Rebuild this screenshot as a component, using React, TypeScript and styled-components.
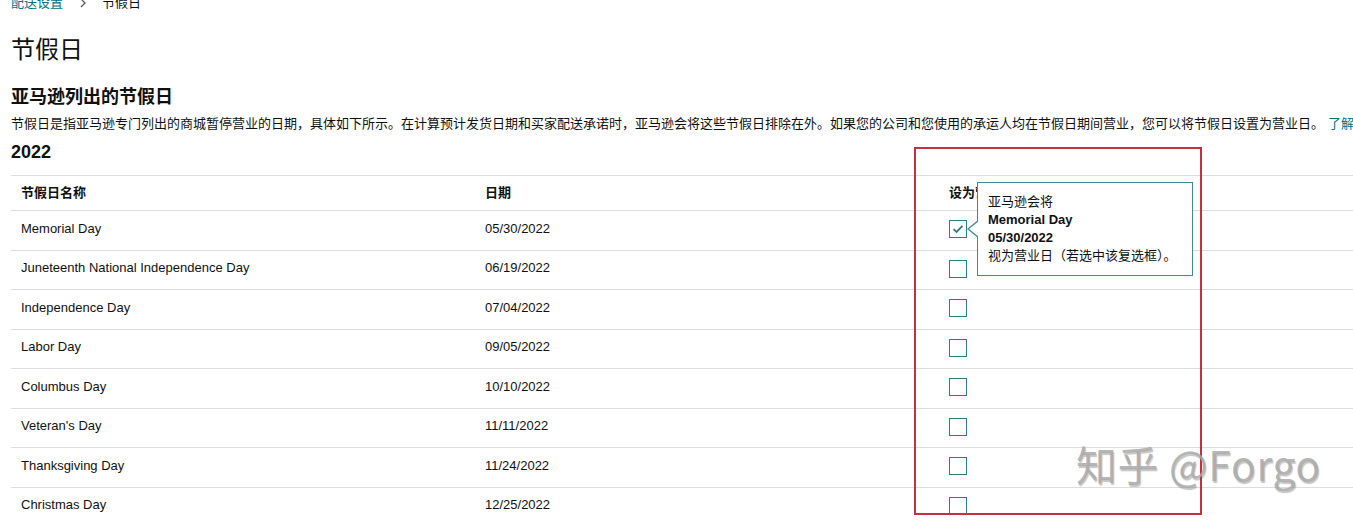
import React from "react";
import styled, { createGlobalStyle } from "styled-components";

const GlobalStyle = createGlobalStyle`
  html, body {
    margin: 0;
    padding: 0;
    background: #fff;
    overflow: hidden;
  }
  body {
    font-family: "Liberation Sans", Arial, "Noto Sans CJK SC", sans-serif;
    color: #0f1111;
  }
`;

const Page = styled.div`
  position: relative;
  display: flex;
  flex-direction: column;
  align-items: stretch;
  padding-left: 11px;
  width: 1353px;
  box-sizing: border-box;
`;

const Breadcrumb = styled.div`
  display: flex;
  align-items: center;
  height: 20px;
  margin-top: -7px;
  font-size: 13px;
  line-height: 20px;
`;

const CrumbLink = styled.a`
  color: #007185;
  text-decoration: none;
`;

const CrumbSep = styled.span`
  display: flex;
  align-items: center;
  margin: 0 16px 0 17px;
  color: #565959;
`;

const CrumbCurrent = styled.span`
  color: #0f1111;
`;

const Title = styled.h1`
  margin: 22px 0 0;
  font-size: 24px;
  font-weight: 400;
  line-height: 30px;
  color: #0f1111;
`;

const SectionTitle = styled.h2`
  margin: 20px 0 0;
  font-size: 18px;
  font-weight: 700;
  line-height: 24px;
  color: #0f1111;
`;

const Description = styled.p`
  margin: 6px 0 0;
  font-size: 13px;
  line-height: 18px;
  color: #0f1111;
  white-space: nowrap;
  overflow: hidden;
`;

const Link = styled.a`
  color: #007185;
  text-decoration: none;
  margin-left: 4px;
`;

const Year = styled.h3`
  margin: 8px 0 0;
  font-size: 18px;
  font-weight: 700;
  line-height: 22px;
  color: #0f1111;
`;

const Table = styled.table`
  margin-top: 12px;
  width: 100%;
  border-collapse: collapse;
  table-layout: fixed;
  font-size: 13px;
  color: #0f1111;
`;

const HeadCell = styled.th<{ $w?: number }>`
  width: ${(p) => (p.$w ? `${p.$w}px` : "auto")};
  height: 30px;
  padding: 0 10px 4px;
  text-align: left;
  font-weight: 700;
  border-top: 1px solid #dddddd;
  border-bottom: 1px solid #dddddd;
  white-space: nowrap;
  overflow: hidden;
`;

const Row = styled.tr`
  border-bottom: 1px solid #dddddd;
`;

const Cell = styled.td`
  height: 34.5px;
  padding: 0 10px 4px;
  vertical-align: middle;
  white-space: nowrap;
`;

const CheckCell = styled(Cell)`
  padding-bottom: 2px;
  height: 36.5px;
`;

const Box = styled.span<{ $checked?: boolean }>`
  display: flex;
  align-items: center;
  justify-content: center;
  width: 18px;
  height: 18px;
  box-sizing: border-box;
  border: 1px solid #2f7c87;
  background: #fff;
  color: #2f7c87;
`;

const Tooltip = styled.div`
  position: absolute;
  left: 977px;
  top: 182px;
  width: 216px;
  box-sizing: border-box;
  padding: 10px 10px;
  background: #fff;
  border: 1px solid #3d8b96;
  font-size: 13px;
  line-height: 18px;
  color: #0f1111;

  &::before,
  &::after {
    content: "";
    position: absolute;
    top: 37px;
    width: 0;
    height: 0;
    border-style: solid;
  }
  &::before {
    left: -11px;
    border-width: 9px 11px 9px 0;
    border-color: transparent #3d8b96 transparent transparent;
  }
  &::after {
    left: -9px;
    top: 38px;
    border-width: 8px 10px 8px 0;
    border-color: transparent #fff transparent transparent;
  }
`;

const TipStrong = styled.div`
  font-weight: 700;
`;

const RedFrame = styled.div`
  position: absolute;
  left: 914px;
  top: 147px;
  width: 288px;
  height: 368px;
  box-sizing: border-box;
  border: 2px solid #c2313e;
  pointer-events: none;
`;

const Watermark = styled.div`
  position: absolute;
  left: 1076px;
  top: 435px;
  font-family: "Noto Sans CJK SC", "Liberation Sans", sans-serif;
  font-size: 41px;
  letter-spacing: 0.6px;
  line-height: 56px;
  color: rgba(170, 170, 170, 0.85);
  text-shadow: 1px 2px 1px rgba(90, 90, 90, 0.35);
  white-space: nowrap;
  pointer-events: none;
`;

const holidays = [
  ["Memorial Day", "05/30/2022", true],
  ["Juneteenth National Independence Day", "06/19/2022", false],
  ["Independence Day", "07/04/2022", false],
  ["Labor Day", "09/05/2022", false],
  ["Columbus Day", "10/10/2022", false],
  ["Veteran's Day", "11/11/2022", false],
  ["Thanksgiving Day", "11/24/2022", false],
  ["Christmas Day", "12/25/2022", false],
] as const;

function Checkbox({ checked }: { checked?: boolean }) {
  return (
    <Box $checked={checked}>
      {checked && (
        <svg width="12" height="10" viewBox="0 0 12 10">
          <path d="M1.5 5.2 L4.5 8 L10.5 1.8" fill="none" stroke="currentColor" strokeWidth="1.8" />
        </svg>
      )}
    </Box>
  );
}

function App() {
  return (
    <>
      <GlobalStyle />
      <Page>
        <Breadcrumb>
          <CrumbLink>配送设置</CrumbLink>
          <CrumbSep>
            <svg width="6" height="10" viewBox="0 0 6 10">
              <path d="M1 1 L5 5 L1 9" fill="none" stroke="currentColor" strokeWidth="1.3" />
            </svg>
          </CrumbSep>
          <CrumbCurrent>节假日</CrumbCurrent>
        </Breadcrumb>
        <Title>节假日</Title>
        <SectionTitle>亚马逊列出的节假日</SectionTitle>
        <Description>
          节假日是指亚马逊专门列出的商城暂停营业的日期，具体如下所示。在计算预计发货日期和买家配送承诺时，亚马逊会将这些节假日排除在外。如果您的公司和您使用的承运人均在节假日期间营业，您可以将节假日设置为营业日。
          <Link>了解更多信息</Link>
        </Description>
        <Year>2022</Year>
        <Table>
          <thead>
            <tr>
              <HeadCell $w={444}>节假日名称</HeadCell>
              <HeadCell $w={444}>日期</HeadCell>
              <HeadCell>设为营业日</HeadCell>
            </tr>
          </thead>
          <tbody>
            {holidays.map(([name, date, checked]) => (
              <Row key={name}>
                <Cell>{name}</Cell>
                <Cell>{date}</Cell>
                <CheckCell>
                  <Checkbox checked={checked} />
                </CheckCell>
              </Row>
            ))}
          </tbody>
        </Table>
        <Tooltip>
          <div>亚马逊会将</div>
          <TipStrong>Memorial Day</TipStrong>
          <TipStrong>05/30/2022</TipStrong>
          <div>视为营业日（若选中该复选框）。</div>
        </Tooltip>
        <RedFrame />
        <Watermark>知乎 @Forgo</Watermark>
      </Page>
    </>
  );
}

export default App;
